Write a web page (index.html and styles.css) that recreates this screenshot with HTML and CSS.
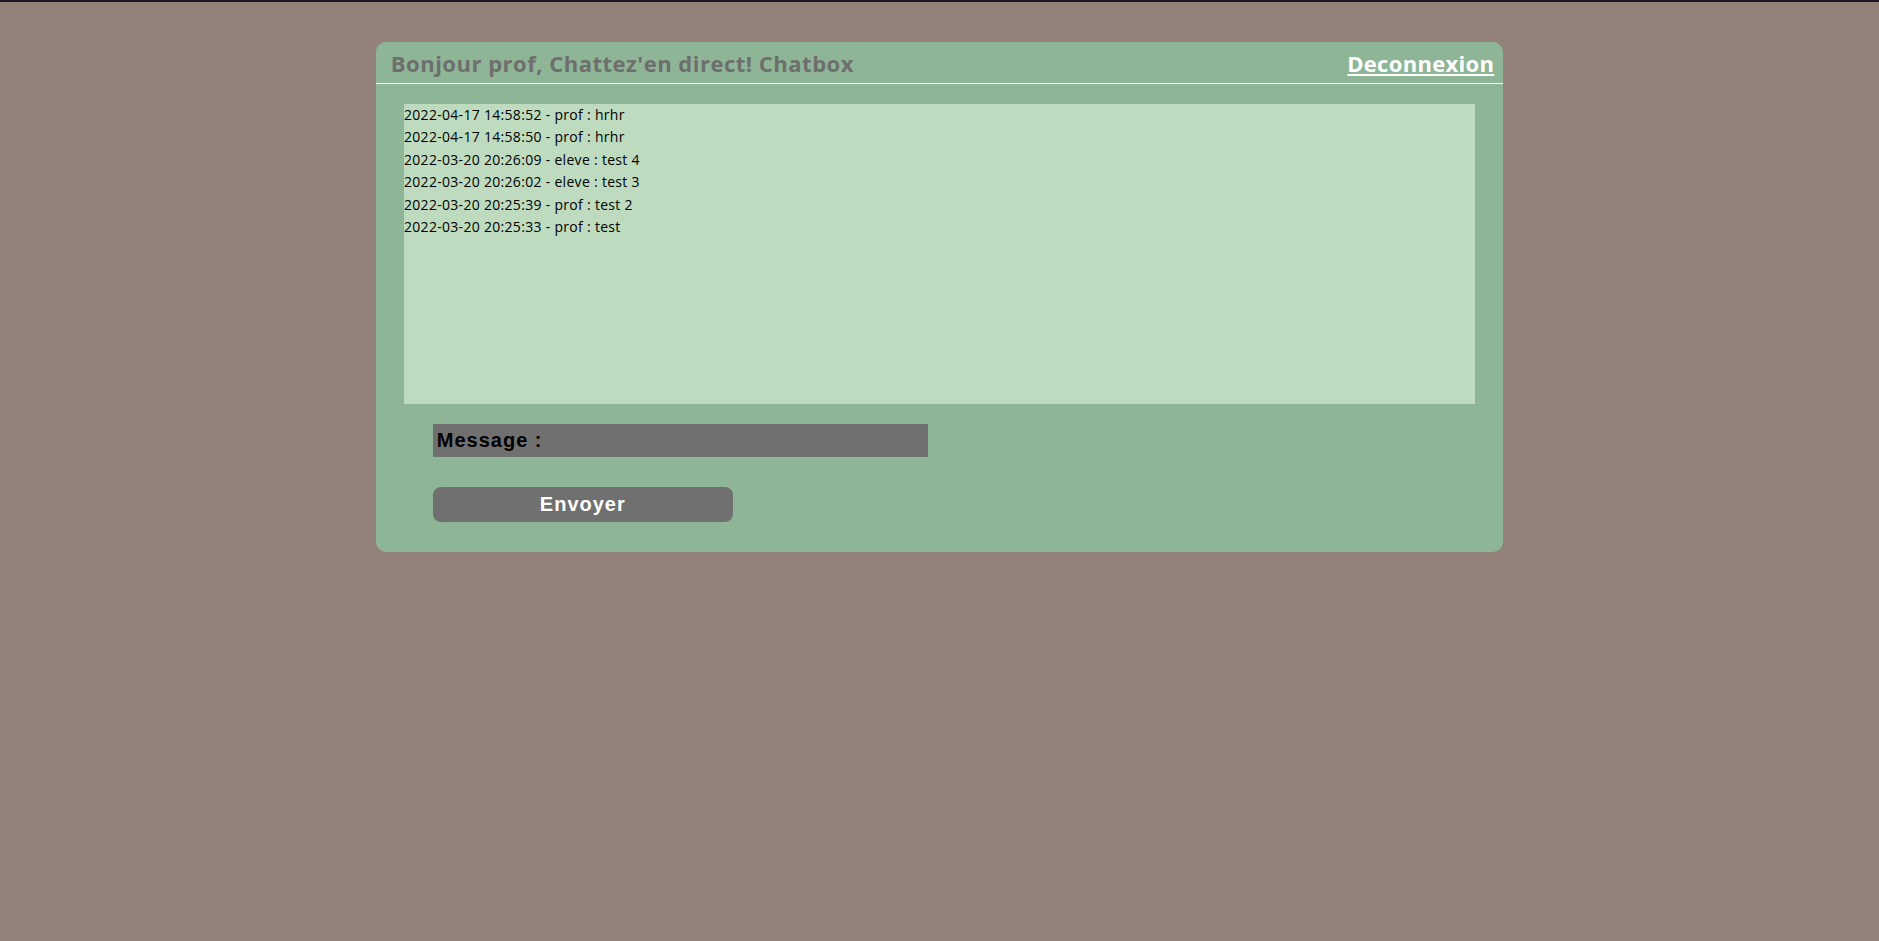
FILE: index.html
```html
<!DOCTYPE html>
<html lang="fr">
<head>
<meta charset="utf-8">
<title>Chatbox</title>
<link rel="stylesheet" href="styles.css">
</head>
<body>
<div class="card">
  <div class="header">
    <h1 class="title">Bonjour prof, Chattez'en direct! Chatbox</h1>
    <a class="logout" href="#">Deconnexion</a>
  </div>
  <div class="log">
    <div class="line">2022-04-17 14:58:52 - prof : hrhr</div>
    <div class="line">2022-04-17 14:58:50 - prof : hrhr</div>
    <div class="line">2022-03-20 20:26:09 - eleve : test 4</div>
    <div class="line">2022-03-20 20:26:02 - eleve : test 3</div>
    <div class="line">2022-03-20 20:25:39 - prof : test 2</div>
    <div class="line">2022-03-20 20:25:33 - prof : test</div>
  </div>
  <form class="form">
    <input class="msg" type="text" placeholder="Message :">
    <button class="send" type="button">Envoyer</button>
  </form>
</div>
</body>
</html>
```
FILE: styles.css
```css
html, body {
  margin: 0;
  padding: 0;
}
body {
  background: #92827a;
  border-top: 2px solid #1c1620;
  font-family: "Open Sans", "DejaVu Sans", sans-serif;
  min-height: 939px;
}
.card {
  width: 60%;
  margin: 40px auto 0;
  background: #8eb596;
  border-radius: 10px;
  padding-bottom: 30px;
}
.header {
  display: flex;
  justify-content: space-between;
  align-items: center;
  height: 41px;
  padding: 0 9px 0 15px;
  border-bottom: 1px solid #ffffff;
}
.title {
  margin: 0;
  font-size: 22px;
  font-weight: bold;
  letter-spacing: 0.5px;
  color: #6e6e6e;
}
.logout {
  font-size: 22px;
  font-weight: bold;
  letter-spacing: 0.3px;
  color: #ffffff;
  text-decoration: underline;
}
.log {
  width: 95%;
  height: 300px;
  margin: 20px auto 0;
  background: #bfdbbf;
  font-size: 14px;
  letter-spacing: 0.3px;
  line-height: 22.4px;
  color: #000;
}
.form {
  display: flex;
  flex-direction: column;
  align-items: flex-start;
  gap: 30px;
  margin: 20px 0 0;
  padding-left: 57px;
}
.msg {
  box-sizing: border-box;
  width: 495px;
  height: 33px;
  margin: 0;
  padding: 0 4px;
  border: none;
  outline: none;
  background: #707070;
  font-family: "Liberation Sans", Arial, sans-serif;
  font-size: 20px;
  font-weight: bold;
  letter-spacing: 1px;
  color: #000;
}
.msg::placeholder {
  color: #000;
  opacity: 1;
}
.send {
  width: 300px;
  height: 35px;
  margin: 0;
  padding: 0;
  border: none;
  border-radius: 8px;
  background: #707070;
  font-family: "Liberation Sans", Arial, sans-serif;
  font-size: 20px;
  font-weight: bold;
  letter-spacing: 1px;
  color: #ffffff;
}
```
